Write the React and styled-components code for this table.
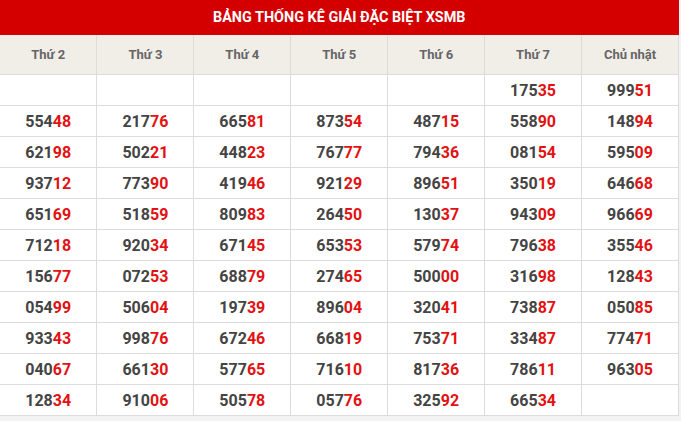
import React from 'react'
import styled, { createGlobalStyle } from 'styled-components'

const GlobalStyle = createGlobalStyle`
  html, body {
    margin: 0;
    padding: 0;
    background: #f3f3f3;
    font-family: Roboto, "Liberation Sans", Arial, sans-serif;
  }
`

const days = ['Thứ 2', 'Thứ 3', 'Thứ 4', 'Thứ 5', 'Thứ 6', 'Thứ 7', 'Chủ nhật']

const rows = [
  ['', '', '', '', '', '17535', '99951'],
  ['55448', '21776', '66581', '87354', '48715', '55890', '14894'],
  ['62198', '50221', '44823', '76777', '79436', '08154', '59509'],
  ['93712', '77390', '41946', '92129', '89651', '35019', '64668'],
  ['65169', '51859', '80983', '26450', '13037', '94309', '96669'],
  ['71218', '92034', '67145', '65353', '57974', '79638', '35546'],
  ['15677', '07253', '68879', '27465', '50000', '31698', '12843'],
  ['05499', '50604', '19739', '89604', '32041', '73887', '05085'],
  ['93343', '99876', '67246', '66819', '75371', '33487', '77471'],
  ['04067', '66130', '57765', '71610', '81736', '78611', '96305'],
  ['12834', '91006', '50578', '05776', '32592', '66534', ''],
]

function Dashboard() {
  return (
    <Wrapper>
      <GlobalStyle />
      <Table>
        <thead>
          <tr>
            <Title colSpan={7}>BẢNG THỐNG KÊ GIẢI ĐẶC BIỆT XSMB</Title>
          </tr>
          <tr>
            {days.map((d) => (
              <HeadCell key={d}>{d}</HeadCell>
            ))}
          </tr>
        </thead>
        <tbody>
          {rows.map((row, i) => (
            <tr key={i}>
              {row.map((n, j) => (
                <Cell key={j}>
                  {n && (
                    <>
                      {n.slice(0, 3)}
                      <Tail>{n.slice(3)}</Tail>
                    </>
                  )}
                </Cell>
              ))}
            </tr>
          ))}
        </tbody>
      </Table>
    </Wrapper>
  )
}

const Wrapper = styled.div`
  width: 681px;
  height: 421px;
  overflow: hidden;
`

const Table = styled.table`
  width: 679px;
  border-collapse: collapse;
  table-layout: fixed;
  background: #fff;
`

const Title = styled.th`
  height: 35px;
  padding: 0;
  background: #d40000;
  color: #fff;
  font-size: 14.4px;
  font-weight: 700;
  text-align: center;
`

const HeadCell = styled.th`
  height: 39px;
  padding: 0;
  background: #f1eee8;
  color: #666;
  font-size: 13px;
  font-weight: 700;
  text-align: center;
  border: 1px solid #dcdcdc;
  border-top: none;
  &:first-child { border-left: none; }
`

const Cell = styled.td`
  height: 30px;
  padding: 0;
  color: #444;
  font-size: 16px;
  font-weight: 700;
  text-align: center;
  border: 1px solid #dcdcdc;
  &:first-child { border-left: none; }
`

const Tail = styled.span`
  color: #e31212;
`

export default Dashboard
